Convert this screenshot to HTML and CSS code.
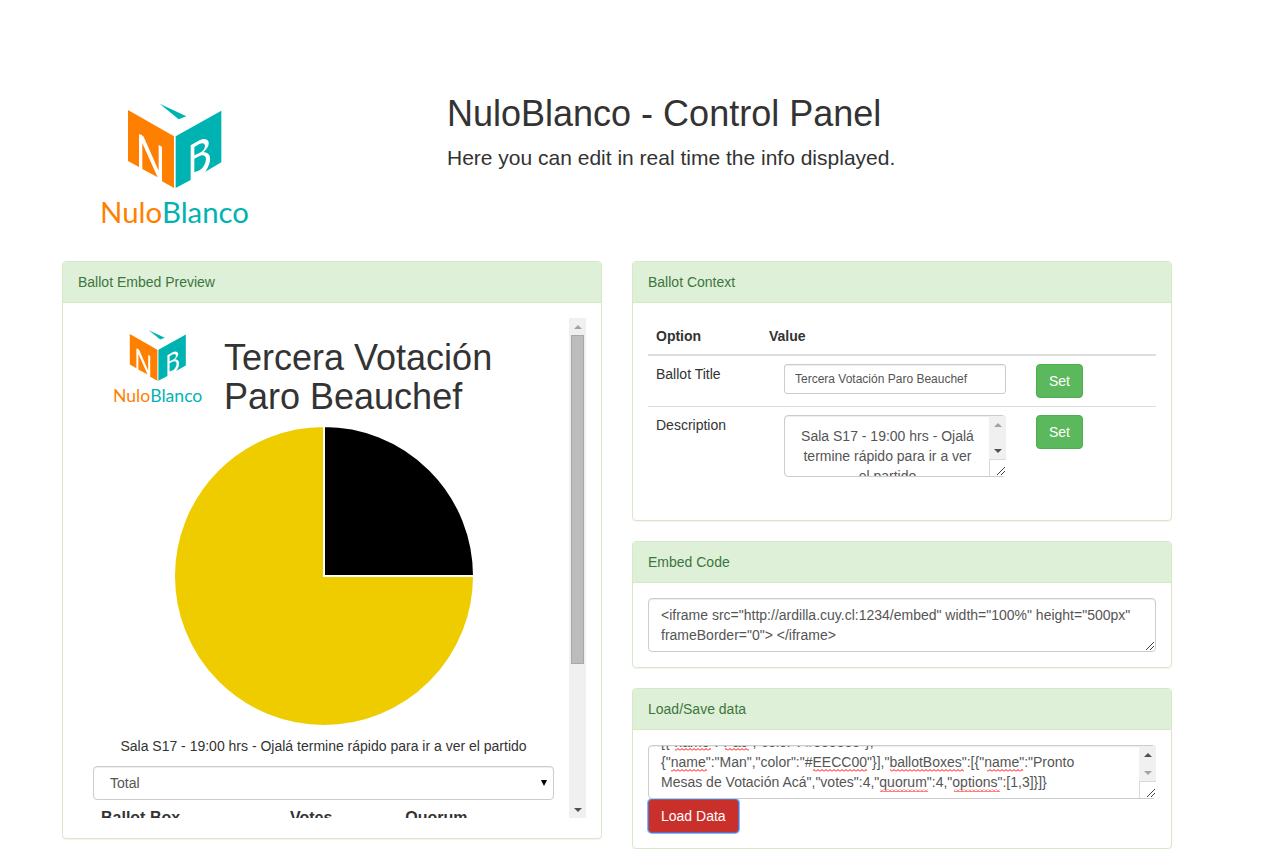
FILE: index.html
```html
<!DOCTYPE html>
<html lang="en">
<head>
<meta charset="utf-8">
<title>NuloBlanco - Control Panel</title>
<link rel="stylesheet" href="styles.css">
</head>
<body>
<svg class="defs" width="0" height="0" aria-hidden="true">
  <symbol id="logo" viewBox="30 30 450 375">
    <path fill="#ff8000" d="M114 60 252 139V294L216 274V170L206 165V242L161 140Q155 133 147 133V231L114 213Z"/>
    <path fill="#ff8000" d="M157 160 203 262 157 237Z"/>
    <path fill="#00b3b3" d="M394 62V217L346 245Q362 222 360 202Q357 187 340 186Q358 171 356 156Q350 142 330 150L302 166V270L257 294V139Z"/>
    <path fill="#00b3b3" d="M313 171 328 162Q344 156 345 168Q344 184 326 190L313 196ZM313 206 330 197Q347 193 348 207Q347 228 329 241L313 247Z"/>
    <path fill="#00b3b3" d="M209 41 289 79 266 88Z"/>
    <text class="logo-text" x="30" y="398"><tspan fill="#ff8000">Nulo</tspan><tspan fill="#00b3b3">Blanco</tspan></text>
  </symbol>
  <symbol id="grip" viewBox="0 0 8 8">
    <path d="M0 8 8 0M4 8 8 4" fill="none" stroke="#444"/>
  </symbol>
  <pattern id="wave" width="4" height="3" patternUnits="userSpaceOnUse">
    <path d="M0 2.5 2 .5 4 2.5" fill="none" stroke="#f00"/>
  </pattern>
</svg>

<div class="page">
  <header class="masthead">
    <div class="brand"><svg class="logo" role="img" aria-label="NuloBlanco"><use href="#logo"/></svg></div>
    <div>
      <h1>NuloBlanco - Control Panel</h1>
      <p class="lead">Here you can edit in real time the info displayed.</p>
    </div>
  </header>

  <main class="columns">
    <section class="panel">
      <h2 class="panel-title">Ballot Embed Preview</h2>
      <div class="panel-body embed">
        <div class="preview">
          <div class="preview-content">
            <div class="ballot-head">
              <svg class="logo-small" role="img" aria-label="NuloBlanco"><use href="#logo"/></svg>
              <h1>Tercera Votación Paro Beauchef</h1>
            </div>
            <svg class="pie" viewBox="0 0 300 300" role="img" aria-label="Votes by option">
              <g stroke="#fff" stroke-width="2">
                <path fill="#000" d="M150 150V0A150 150 0 0 1 300 150Z"/>
                <path fill="#eecc00" d="M150 150H300A150 150 0 1 1 150 0Z"/>
              </g>
            </svg>
            <p class="caption">Sala S17 - 19:00 hrs - Ojalá termine rápido para ir a ver el partido</p>
            <div class="select-wrap">
              <select class="control" aria-label="Ballot box"><option>Total</option></select>
              <svg class="caret" viewBox="0 0 6 6" aria-hidden="true"><path d="M0 0H6L3 6Z"/></svg>
            </div>
            <table class="results">
              <thead><tr><th class="c-box">Ballot Box</th><th class="c-votes">Votes</th><th>Quorum</th></tr></thead>
            </table>
          </div>
          <div class="scrollbar" aria-hidden="true">
            <span class="arrow up dim"></span>
            <span class="track"><span class="thumb"></span></span>
            <span class="arrow down"></span>
          </div>
        </div>
      </div>
    </section>

    <div class="stack">
      <section class="panel">
        <h2 class="panel-title">Ballot Context</h2>
        <div class="panel-body">
          <table class="options">
            <thead><tr><th class="c-option">Option</th><th class="c-value">Value</th><th></th></tr></thead>
            <tbody>
              <tr>
                <td><label for="title">Ballot Title</label></td>
                <td class="value"><input id="title" class="control small" type="text" value="Tercera Votación Paro Beauchef"></td>
                <td class="action"><button class="btn success" type="button">Set</button></td>
              </tr>
              <tr>
                <td><label for="description">Description</label></td>
                <td class="value">
                  <div class="area">
                    <textarea id="description" class="control description" spellcheck="false">Sala S17 - 19:00 hrs - Ojalá termine rápido para ir a ver el partido</textarea>
                    <div class="scrollbar over" aria-hidden="true"><span class="arrow up dim"></span><span class="track"></span><span class="arrow down"></span><span class="corner"><svg class="grip"><use href="#grip"/></svg></span></div>
                  </div>
                </td>
                <td class="action"><button class="btn success" type="button">Set</button></td>
              </tr>
            </tbody>
          </table>
        </div>
      </section>

      <section class="panel">
        <h2 class="panel-title" id="embed-label">Embed Code</h2>
        <div class="panel-body">
          <div class="area">
            <textarea class="control code" aria-labelledby="embed-label" spellcheck="false">&lt;iframe src="http://ardilla.cuy.cl:1234/embed" width="100%" height="500px" frameBorder="0"&gt; &lt;/iframe&gt;</textarea>
            <svg class="grip alone" aria-hidden="true"><use href="#grip"/></svg>
          </div>
        </div>
      </section>

      <section class="panel">
        <h2 class="panel-title" id="data-label">Load/Save data</h2>
        <div class="panel-body">
          <div class="area">
            <textarea id="data" class="control code scrolled" aria-labelledby="data-label" spellcheck="false">[{"name":"Pac","color":"#000000"},
{"name":"Man","color":"#EECC00"}],"ballotBoxes":[{"name":"Pronto Mesas de Votación Acá","votes":4,"quorum":4,"options":[1,3]}]}</textarea>
            <svg class="spelling" aria-hidden="true">
              <g fill="url(#wave)">
                <rect x="27" y="3" width="36" height="3"/><rect x="77" y="3" width="24" height="3"/>
                <rect x="23" y="24" width="36" height="3"/><rect x="165" y="24" width="54" height="3"/>
                <rect x="242" y="24" width="74" height="3"/><rect x="339" y="24" width="36" height="3"/>
                <rect x="232" y="44" width="48" height="3"/><rect x="306" y="44" width="46" height="3"/>
              </g>
            </svg>
            <div class="scrollbar over" aria-hidden="true"><span class="arrow up"></span><span class="track"></span><span class="arrow down dim"></span><span class="corner"><svg class="grip"><use href="#grip"/></svg></span></div>
          </div>
          <button class="btn danger" type="button">Load Data</button>
        </div>
      </section>
    </div>
  </main>
</div>
<script>
  const data = document.getElementById("data");
  data.scrollTop = data.scrollHeight;
</script>
</body>
</html>
```
FILE: styles.css
```css
* { box-sizing: border-box; }

body {
  margin: 0;
  background: #fff;
  color: #333;
  font: 14px/20px "Liberation Sans", Arial, sans-serif;
}

.defs { position: absolute; }

.page { padding: 94px 90px 0 62px; }

h1 {
  margin: 0;
  font-size: 36px;
  font-weight: 400;
  line-height: 39px;
}

.masthead {
  display: grid;
  grid-template-columns: 385px 1fr;
  min-height: 167px;
}

.brand { padding: 6px 38px; }

.logo { display: block; width: 150px; height: 125px; }

.logo-text { font: 88px Lato, sans-serif; }

.lead { margin: 10px 0 0; font-size: 21px; line-height: 30px; }

.columns {
  display: grid;
  grid-template-columns: 1fr 1fr;
  gap: 30px;
  align-items: start;
}

.stack { display: grid; gap: 20px; }

.panel {
  min-width: 0;
  border: 1px solid #d6e9c6;
  border-radius: 4px;
  box-shadow: 0 1px 1px rgba(0, 0, 0, .05);
}

.panel-title {
  margin: 0;
  padding: 10px 15px;
  border-bottom: 1px solid #d6e9c6;
  border-radius: 3px 3px 0 0;
  background: #dff0d8;
  color: #3c763d;
  font-size: 14px;
  font-weight: 400;
}

.panel-body { padding: 15px; }

.panel-body.embed { padding-bottom: 20px; }

.control {
  display: block;
  width: 100%;
  margin: 0;
  padding: 6px 12px;
  border: 1px solid #ccc;
  border-radius: 4px;
  background: #fff;
  box-shadow: inset 0 1px 1px rgba(0, 0, 0, .075);
  color: #555;
  font: inherit;
}

textarea.control { overflow: hidden; resize: none; }

.small {
  height: 30px;
  padding: 5px 10px;
  border-radius: 3px;
  font-size: 12px;
}

.btn {
  display: block;
  padding: 6px 12px;
  border: 1px solid;
  border-radius: 4px;
  color: #fff;
  font: inherit;
}

.success { border-color: #4cae4c; background: #5cb85c; }

.danger {
  border-color: #5a6fc0;
  background: #c9302c;
  box-shadow: 0 0 0 1px #8fb4f5;
}

/* Embed preview */

.preview { display: flex; height: 500px; overflow: hidden; }

.preview-content { flex: 1; min-width: 0; padding: 0 15px; }

.ballot-head {
  display: grid;
  grid-template-columns: 90px 1fr;
  gap: 21px;
  padding: 10px 0 0 20px;
}

.ballot-head h1 { padding: 10px 0; }

.logo-small { width: 90px; height: 75px; }

.pie { display: block; width: 300px; height: 300px; margin: 0 auto; overflow: visible; }

.caption { margin: 10px 0; text-align: center; }

.select-wrap { position: relative; }

select.control { height: 34px; padding: 6px 16px; appearance: none; }

.caret {
  position: absolute;
  top: 14px;
  right: 7px;
  width: 6px;
  height: 6px;
}

.results, .options { width: 100%; border-spacing: 0; table-layout: fixed; }

.results th { padding: 8px; font-size: 16px; text-align: left; }

.c-box { width: 41%; }

.c-votes { width: 25%; }

/* Scrollbars */

.scrollbar {
  display: flex;
  flex-direction: column;
  flex: none;
  width: 17px;
  background: #f0f0f0;
}

.scrollbar.over {
  position: absolute;
  top: 1px;
  right: 0;
  bottom: 1px;
}

.arrow { display: grid; place-items: center; height: 17px; flex: none; }

.arrow::before {
  content: "";
  border: 4px solid transparent;
  border-top-width: 0;
  border-bottom-color: #505050;
}

.arrow.down::before {
  border-width: 4px 4px 0;
  border-top-color: #505050;
}

.arrow.up.dim::before { border-bottom-color: #a3a3a3; }

.arrow.down.dim::before { border-top-color: #a3a3a3; }

.track { flex: 1; padding: 0 2px; }

.thumb {
  display: block;
  height: 329px;
  border: 1px solid #a8a8a8;
  background: #bcbcbc;
}

.corner {
  display: flex;
  align-items: flex-end;
  justify-content: flex-end;
  height: 17px;
  padding: 1px;
  border-top: 1px solid #d9d9d9;
  border-left: 1px solid #d9d9d9;
  background: #fff;
}

.grip { width: 8px; height: 8px; }

.grip.alone { position: absolute; right: 2px; bottom: 2px; }

/* Option table */

.options { margin-bottom: 20px; }

.options th {
  height: 38px;
  padding: 8px;
  border-bottom: 2px solid #ddd;
  text-align: left;
}

.options td { padding: 8px; vertical-align: top; }

.options tr + tr td { border-top: 1px solid #ddd; }

.c-option { width: 113px; }

.c-value { width: 260px; }

.options td.value { padding: 8px 15px 8px 23px; }

.options td.action { padding-left: 15px; }

.area { position: relative; }

.description { height: 62px; padding: 10px 27px 10px 12px; text-align: center; }

.code { height: 54px; }

.scrolled { padding-right: 40px; }

.spelling {
  position: absolute;
  top: 0;
  left: 0;
  width: 380px;
  height: 50px;
  pointer-events: none;
}
```
